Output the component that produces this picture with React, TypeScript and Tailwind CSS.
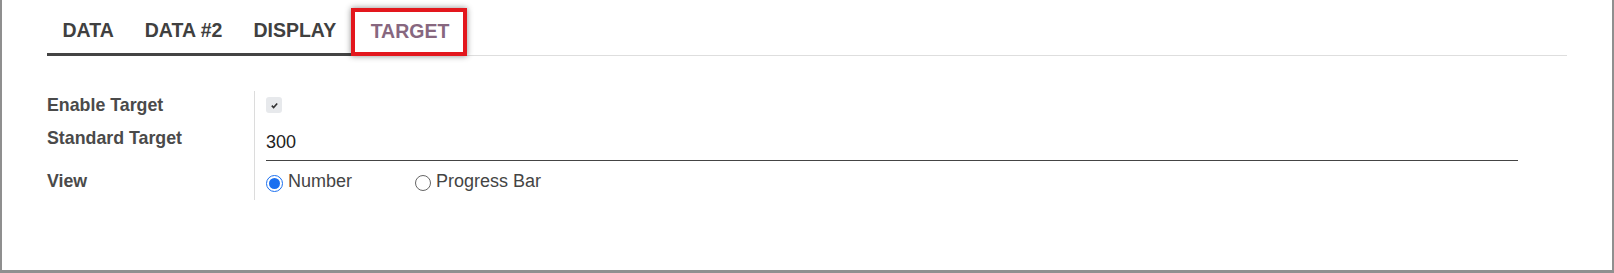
export default function App() {
  return (
    <main className="box-border w-[1614px] h-[273px] bg-white border-l-2 border-r-2 border-b-[3px] border-solid border-[#8f8f8f] font-['Liberation_Sans',Arial,sans-serif] text-[#444]">
      {/* Tabs */}
      <div className="ml-[45px] pt-[8px] w-[1520px] flex border-b border-[#dedede]">
        <div className="flex h-[48px] -mb-px border-b-[3px] border-[#444]">
          <Tab label="DATA" />
          <Tab label="DATA #2" />
          <Tab label="DISPLAY" />
        </div>
        <div className="h-[48px] -mb-px -ml-[1px] flex items-center pl-[16px] pr-[14px] border-4 border-[#e3171d] shadow-[0_0_6px_rgba(0,0,0,0.45)] text-[19.5px] font-bold text-[#87677f]">
          TARGET
        </div>
      </div>

      {/* Form */}
      <div className="ml-[45px] mt-[35px] flex">
        <div className="w-[207px] text-[17.8px] font-bold leading-[24px] text-[#4a4a4a]">
          <div className="h-[28px] flex items-center">Enable Target</div>
          <div className="h-[42px] pt-[7px]">Standard Target</div>
          <div className="pt-[8px]">View</div>
        </div>
        <div className="w-[1264px] border-l border-[#dcdcdc] pl-[11px] pb-[7px]">
          <div className="h-[28px] flex items-center">
            <span className="grid place-items-center w-[16px] h-[16px] rounded-[3px] bg-[#e7e9ec]">
              <svg viewBox="0 0 10 10" className="w-[9px] h-[9px]">
                <path d="M2 5.2 L4 7.2 L8 2.8" fill="none" stroke="#333" strokeWidth="1.8" />
              </svg>
            </span>
          </div>
          <div className="pt-[11px] pb-[6px] border-b border-[#444] text-[18px] leading-[24px] text-[#222]">300</div>
          <div className="pt-[8px] flex items-center text-[18px] leading-[24px] text-[#444]">
            <Radio checked label="Number" />
            <div className="ml-[63px]">
              <Radio label="Progress Bar" />
            </div>
          </div>
        </div>
      </div>
    </main>
  );
}

function Tab({ label }: { label: string }) {
  return (
    <div className="h-full flex items-center px-[15.5px] text-[19.5px] font-bold text-[#404040]">{label}</div>
  );
}

function Radio({ label, checked = false }: { label: string; checked?: boolean }) {
  return (
    <label className="flex items-center gap-[5px]">
      {checked ? (
        <span className="mt-[4px] w-[17px] h-[17px] rounded-full border border-[#1a6ff0] p-[2px]">
          <span className="block w-full h-full rounded-full bg-[#1a6ff0]" />
        </span>
      ) : (
        <span className="mt-[4px] w-[16px] h-[16px] rounded-full border border-[#666]" />
      )}
      <span>{label}</span>
    </label>
  );
}
